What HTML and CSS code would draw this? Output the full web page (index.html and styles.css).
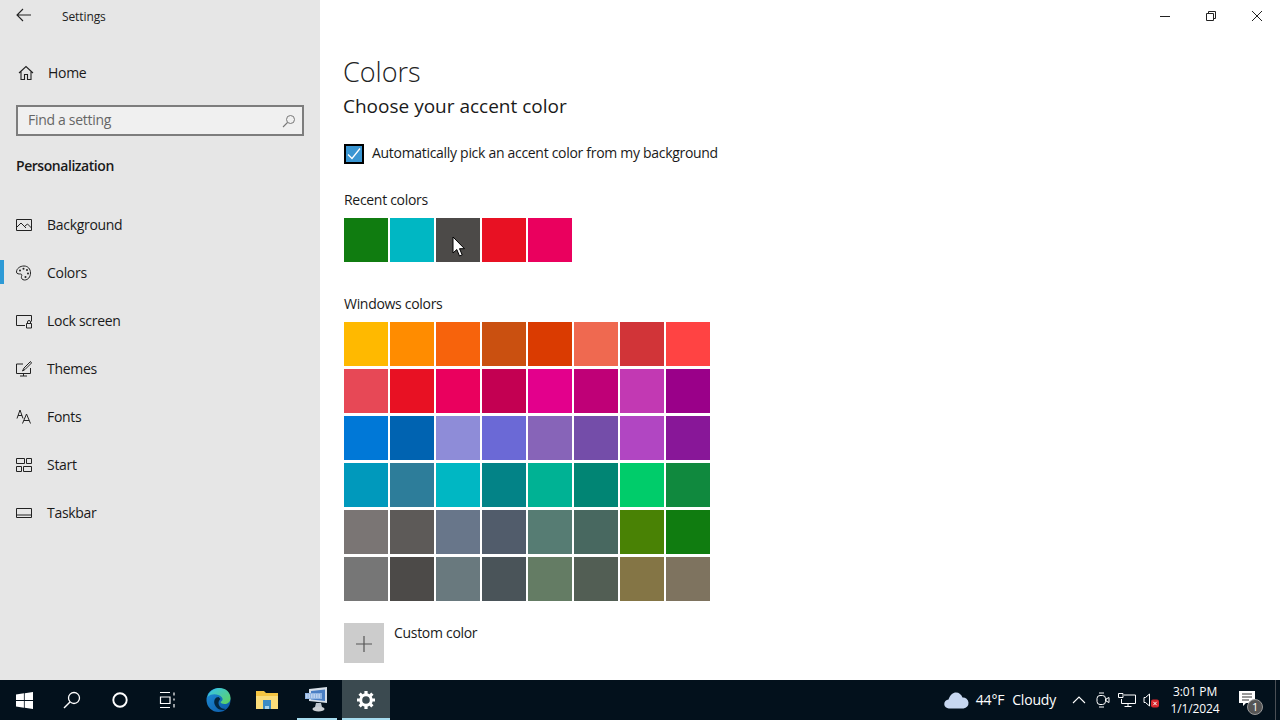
FILE: index.html
```html
<!DOCTYPE html>
<html lang="en">
<head>
<meta charset="utf-8">
<title>Settings</title>
<link rel="stylesheet" href="styles.css">
</head>
<body>
<div class="desktop">
  <div class="window">
    <aside class="sidebar">
      <div class="appbar">
        <svg class="back" width="16" height="14" viewBox="0 0 16 14"><path d="M7 1 1 7l6 6M1 7h14" fill="none" stroke="#222" stroke-width="1.1"/></svg>
        <span class="apptitle">Settings</span>
      </div>
      <div class="home">
        <svg class="navicon" width="16" height="16" viewBox="0 0 16 16"><path d="M1 8 8 1.5 15 8M3 6.500v8h3.500v-5h3v5H13v-8" fill="none" stroke="#222" stroke-width="1.100"/></svg>
        <span class="hometext">Home</span>
      </div>
      <div class="search">
        <span class="searchtext">Find a setting</span>
        <svg width="14" height="14" viewBox="0 0 14 14"><circle cx="8.500" cy="5.500" r="4" fill="none" stroke="#777" stroke-width="1"/><path d="M5.500 8.500 1 13" stroke="#777" stroke-width="1.100"/></svg>
      </div>
      <h2 class="section">Personalization</h2>
      <nav class="nav">
        <div class="navitem">
          <svg class="navicon" width="16" height="16" viewBox="0 0 16 16"><path d="M.5 2.500h15v11H.5zM.5 10.500 5 6l5 5M9 9l2.500-2 4 4" fill="none" stroke="#222"/></svg>
          <span>Background</span>
        </div>
        <div class="navitem active">
          <svg class="navicon" width="16" height="16" viewBox="0 0 16 16"><path d="M8 1C4 1 .5 3.500.5 7c0 2 2.500 2 4 2 1.500 0 1.500 1.500 1 2.500-.5 1.500.5 3.500 3 3.500 3.500 0 6-3 6-7S12 1 8 1z" fill="none" stroke="#222"/><circle cx="4" cy="5.500" r="1" fill="#222"/><circle cx="7.500" cy="3.800" r="1" fill="#222"/><circle cx="11" cy="5" r="1" fill="#222"/><circle cx="12" cy="8.500" r="1" fill="#222"/><circle cx="9.500" cy="12" r="1" fill="#222"/></svg>
          <span>Colors</span>
        </div>
        <div class="navitem">
          <svg class="navicon" width="16" height="16" viewBox="0 0 16 16"><path d="M9 12.500H.5v-10h15v6" fill="none" stroke="#222"/><path d="M10.500 10.500h5v4.500h-5zM11.500 10.500V9a1.500 1.500 0 0 1 3 0v1.500" fill="none" stroke="#222"/></svg>
          <span>Lock screen</span>
        </div>
        <div class="navitem">
          <svg class="navicon" width="16" height="16" viewBox="0 0 16 16"><path d="M7 3H.5v9.500h14V7M7.500 12.500V15M4 15h7" fill="none" stroke="#222"/><path d="M14.500.5 8 7l-1.500 3L9 8.500 15.500 2z" fill="none" stroke="#222"/></svg>
          <span>Themes</span>
        </div>
        <div class="navitem">
          <svg class="navicon" width="16" height="16" viewBox="0 0 16 16"><path d="M1 9.500 4 1l3 8.500M2 6.500h4M6.500 14.500 10.500 5l4 9.500M7.800 11.500h5.400" fill="none" stroke="#222"/></svg>
          <span>Fonts</span>
        </div>
        <div class="navitem">
          <svg class="navicon" width="16" height="16" viewBox="0 0 16 16"><path d="M.5 1.500h8v5h-8zM10.500 1.500h5v5h-5zM.5 9.500h5v5h-5zM7.500 9.500h8v5h-8z" fill="none" stroke="#222"/></svg>
          <span>Start</span>
        </div>
        <div class="navitem">
          <svg class="navicon" width="16" height="16" viewBox="0 0 16 16"><path d="M.5 3.500h15v9H.5zM.5 10h15" fill="none" stroke="#222"/></svg>
          <span>Taskbar</span>
        </div>
      </nav>
    </aside>
    <main class="content">
      <div class="controls">
        <div class="ctrl"><svg width="10" height="10" viewBox="0 0 10 10"><path d="M0 5.500h10" stroke="#222"/></svg></div>
        <div class="ctrl"><svg width="10" height="10" viewBox="0 0 10 10"><path d="M.5 2.500h7v7h-7zM2.500 2.500v-2h7v7h-2" fill="none" stroke="#222"/></svg></div>
        <div class="ctrl"><svg width="10" height="10" viewBox="0 0 10 10"><path d="M0 0l10 10M10 0 0 10" stroke="#222"/></svg></div>
      </div>
      <h1 class="title">Colors</h1>
      <h2 class="subtitle">Choose your accent color</h2>
      <div class="checkrow">
        <span class="checkbox"><svg width="16" height="16" viewBox="0 0 16 16"><path d="M2 8.500 6 12.500l8-10" fill="none" stroke="#fff" stroke-width="1.300"/></svg></span>
        <span class="checktext">Automatically pick an accent color from my background</span>
      </div>
      <div class="label recent-label">Recent colors</div>
      <div class="swatches recent">
        <div class="sw c-107c10"></div><div class="sw c-00b7c3"></div><div class="sw c-4c4a48"></div><div class="sw c-e81123"></div><div class="sw c-ea005e"></div>
      </div>
      <div class="label windows-label">Windows colors</div>
      <div class="swatches palette">
        <div class="sw c-ffb900"></div><div class="sw c-ff8c00"></div><div class="sw c-f7630c"></div><div class="sw c-ca5010"></div><div class="sw c-da3b01"></div><div class="sw c-ef6950"></div><div class="sw c-d13438"></div><div class="sw c-ff4343"></div>
        <div class="sw c-e74856"></div><div class="sw c-e81123"></div><div class="sw c-ea005e"></div><div class="sw c-c30052"></div><div class="sw c-e3008c"></div><div class="sw c-bf0077"></div><div class="sw c-c239b3"></div><div class="sw c-9a0089"></div>
        <div class="sw c-0078d7"></div><div class="sw c-0063b1"></div><div class="sw c-8e8cd8"></div><div class="sw c-6b69d6"></div><div class="sw c-8764b8"></div><div class="sw c-744da9"></div><div class="sw c-b146c2"></div><div class="sw c-881798"></div>
        <div class="sw c-0099bc"></div><div class="sw c-2d7d9a"></div><div class="sw c-00b7c3"></div><div class="sw c-038387"></div><div class="sw c-00b294"></div><div class="sw c-018574"></div><div class="sw c-00cc6a"></div><div class="sw c-10893e"></div>
        <div class="sw c-7a7574"></div><div class="sw c-5d5a58"></div><div class="sw c-68768a"></div><div class="sw c-515c6b"></div><div class="sw c-567c73"></div><div class="sw c-486860"></div><div class="sw c-498205"></div><div class="sw c-107c10"></div>
        <div class="sw c-767676"></div><div class="sw c-4c4a48"></div><div class="sw c-69797e"></div><div class="sw c-4a5459"></div><div class="sw c-647c64"></div><div class="sw c-525e54"></div><div class="sw c-847545"></div><div class="sw c-7e735f"></div>
      </div>
      <div class="custom">
        <div class="plus"><svg width="16" height="16" viewBox="0 0 16 16"><path d="M8 0v16M0 8h16" stroke="#555" stroke-width="1.200"/></svg></div>
        <span class="customtext">Custom color</span>
      </div>
    </main>
    <svg class="cursor" width="14" height="21" viewBox="0 0 14 21"><path d="M1 1v16l3.800-3.500 2.700 6.500 2.700-1.100-2.700-6.200H12.500z" fill="#fff" stroke="#000" stroke-width="1"/></svg>
  </div>
  <footer class="taskbar">
    <div class="tbtn"><svg width="17" height="17" viewBox="0 0 17 17"><path d="M0 2.400 7.900 1.300V8H0zM8.700 1.200 17 0v8H8.700zM0 9h7.900v6.700L0 14.600zM8.700 9H17v8l-8.300-1.200z" fill="#fff"/></svg></div>
    <div class="tbtn"><svg width="18" height="18" viewBox="0 0 18 18"><circle cx="11" cy="7" r="5.500" fill="none" stroke="#fff" stroke-width="1.300"/><path d="M7 11 1 17" stroke="#fff" stroke-width="1.500"/></svg></div>
    <div class="tbtn"><svg width="16" height="16" viewBox="0 0 16 16"><circle cx="8" cy="8" r="6.700" fill="none" stroke="#fff" stroke-width="1.900"/></svg></div>
    <div class="tbtn"><svg width="18" height="16" viewBox="0 0 18 16"><path d="M1 .5h10M1 15.500h10M1.500 5h9.500v6.500H1.500zM15 .5v3M15 6.500v2M15 12v3.500" fill="none" stroke="#fff" stroke-width="1.200"/></svg></div>
    <div class="tbtn edge"><svg width="25" height="24" viewBox="0 0 24 24">
      <defs>
        <linearGradient id="eb" x1="0" y1="0" x2="1" y2="1"><stop offset="0" stop-color="#1f8fd8"/><stop offset="1" stop-color="#0b57a4"/></linearGradient>
        <linearGradient id="eg" x1="0" y1="0" x2="1" y2="1"><stop offset="0" stop-color="#35c1f1"/><stop offset="1" stop-color="#5fd35a"/></linearGradient>
      </defs>
      <circle cx="12" cy="12" r="12" fill="url(#eb)"/>
      <path d="M1 9C3 2 9 0 13 0c6 0 11 4 11 10 0 4-3 6-6 6-2 0-4-1-4-2 2-1 3-3 1-5-3-3-10-4-14 0z" fill="url(#eg)"/>
      <path d="M12 9c-3 0-5 3-4 7 1 3 4 6 8 6 1 0 2 0 3-1-4 0-7-3-7-6 0-2 1-3 2-4z" fill="#03263f"/>
    </svg></div>
    <div class="tbtn files"><svg width="24" height="20" viewBox="0 0 24 20"><path d="M1 1h8l2 2h12v16H1z" fill="#f5c542"/><path d="M1 6h22v13H1z" fill="#fbdd7a"/><path d="M8 10h8v9h-2v-3h-4v3H8z" fill="#3b8ac4"/><path d="M10 16h4v3h-4z" fill="#a9d3ec"/></svg></div>
    <div class="tbtn app running"><svg width="24" height="26" viewBox="0 0 24 26"><path d="M5 2 23 0v16L5 14z" fill="#d7dfe8"/><path d="M7 4 21 2.500v11.500L7 12.500z" fill="#4a7fc4"/><path d="M1 6h17v6H1z" fill="#8fb4e2"/><path d="M2 8h15M2 10h15" stroke="#e8f0fb" stroke-dasharray="1.500 1"/><path d="M12 16h5l1 4h-7z" fill="#bcc4cc"/><ellipse cx="14.500" cy="22" rx="6" ry="2.500" fill="#c9ced3"/></svg></div>
    <div class="tbtn settings running"><svg width="20" height="20" viewBox="0 0 20 20"><circle cx="10" cy="10" r="5.300" fill="none" stroke="#fff" stroke-width="3"/><path d="M10 1v3M10 16v3M1 10h3M16 10h3M3.600 3.600l2.200 2.200M14.200 14.200l2.200 2.200M16.400 3.600l-2.200 2.200M5.800 14.200l-2.200 2.200" stroke="#fff" stroke-width="3.200"/></svg></div>
    <div class="tray">
      <svg class="cloud" width="25" height="17" viewBox="0 0 25 17"><path d="M5 16.500a4.500 4.500 0 0 1-.5-9C6 3 9 .5 12 .5c3 0 5.500 2 6.500 5a5.500 5.500 0 0 1 1 11z" fill="#c7d7f0"/></svg>
      <span class="weather">44°F</span>
      <span class="weather cloudy">Cloudy</span>
      <svg class="chev" width="14" height="8" viewBox="0 0 14 8"><path d="M1 7l6-6 6 6" fill="none" stroke="#fff" stroke-width="1.100"/></svg>
      <div class="trayicon"><svg width="14" height="16" viewBox="0 0 14 16"><rect x="1" y="3.500" width="8.500" height="9" rx="3" fill="none" stroke="#fff"/><path d="M10 7l3-1.500v5L10 9zM3 1h5M3 15h5" fill="none" stroke="#fff"/></svg></div>
      <div class="trayicon"><svg width="18" height="16" viewBox="0 0 18 16"><path d="M5 1.500H.5v4H5zM6 3h11.500v8.500H3.500V7M10 11.500V14.500M6.500 14.500h7" fill="none" stroke="#fff"/></svg></div>
      <div class="trayicon"><svg width="16" height="16" viewBox="0 0 16 16"><path d="M1 5.500h1.500L6.500 2v12l-4-3.500H1z" fill="none" stroke="#fff"/><rect x="8" y="7.500" width="8" height="8" rx="2" fill="#d8262c"/><path d="M10.300 9.800l3.400 3.400M13.700 9.800l-3.400 3.400" stroke="#fff"/></svg></div>
      <div class="clock"><span>3:01 PM</span><span>1/1/2024</span></div>
      <div class="notify">
        <svg class="bubble" width="16" height="16" viewBox="0 0 16 16"><path d="M0 0h16v12H7l-3 3v-3H0z" fill="#fff"/><path d="M3 3h10M3 6h10M3 9h7" stroke="#333"/></svg>
        <span class="badge">1</span>
      </div>
      <div class="showdesk"></div>
    </div>
  </footer>
</div>
</body>
</html>
```
FILE: styles.css
```css
* { box-sizing: border-box; }
html, body { margin: 0; height: 100%; }
body { font-family: "Open Sans", "Noto Sans", "Liberation Sans", sans-serif; font-size: 14px; letter-spacing: -0.3px; color: #1a1a1a; overflow: hidden; }
.desktop { width: 1280px; height: 720px; display: flex; flex-direction: column; }
.window { position: relative; flex: 1; display: flex; background: #fff; min-height: 0; }

.sidebar { width: 320px; background: #e6e6e6; display: flex; flex-direction: column; }
.appbar { height: 32px; display: flex; align-items: center; padding-left: 16px; }
.back { margin-top: -2px; }
.apptitle { margin-left: 30px; font-size: 12px; line-height: 32px; color: #222; padding-top: 1px; letter-spacing: -0.1px; }
.home { margin-top: 17px; height: 48px; display: flex; align-items: center; padding-left: 18px; }
.hometext { margin-left: 14px; font-size: 14px; margin-bottom: 1px; }
.search { margin: 8px 16px 0; height: 31px; border: 2px solid #7d7d7d; background: #f0f0f0; display: flex; align-items: center; justify-content: space-between; padding: 0 6px 0 10px; }
.searchtext { color: #666; font-size: 14px; margin-bottom: 3px; }
.section { margin: 16px 0 0 16px; font-size: 14px; line-height: 28px; font-weight: 600; letter-spacing: -0.45px; }
.nav { margin-top: 21px; display: flex; flex-direction: column; }
.navitem { position: relative; height: 48px; display: flex; align-items: center; gap: 15px; padding-left: 16px; font-size: 14px; }
.navitem span { margin-bottom: 1px; }
.navitem.active::before { content: ""; position: absolute; left: 0; top: 11px; width: 4px; height: 24px; background: #2e9ad6; }
.navicon { flex: none; }

.content { flex: 1; padding-left: 24px; min-width: 0; display: flex; flex-direction: column; align-items: flex-start; }
.controls { align-self: flex-end; height: 32px; display: flex; }
.ctrl { width: 46px; height: 32px; display: flex; align-items: center; justify-content: center; }
.title { margin: 20px 0 0 -1px; font-size: 27px; line-height: 40px; font-weight: 300; color: #222; letter-spacing: 0; }
.subtitle { margin: 0 0 0 -1px; font-size: 19px; line-height: 28px; font-weight: 400; color: #1a1a1a; letter-spacing: 0; }
.checkrow { margin-top: 24px; height: 20px; display: flex; align-items: center; gap: 8px; font-size: 14px; }
.checktext { margin-bottom: 3px; }
.checkbox { width: 20px; height: 20px; border: 2px solid #000; background: #3a96d2; display: flex; align-items: center; justify-content: center; }
.label { font-size: 14px; line-height: 20px; }
.recent-label { margin-top: 26px; }
.windows-label { margin-top: 32px; }
.swatches { margin-top: 8px; display: grid; grid-template-columns: repeat(8, 44px); column-gap: 2px; row-gap: 3px; }
.sw { width: 44px; height: 44px; }
.custom { margin-top: 22px; display: flex; align-items: flex-start; gap: 10px; }
.plus { width: 40px; height: 40px; background: #ccc; display: flex; align-items: center; justify-content: center; padding-top: 1px; }
.customtext { line-height: 20px; font-size: 14px; }
.cursor { position: absolute; left: 452px; top: 236px; }

.c-ffb900 { background: #ffb900; } .c-ff8c00 { background: #ff8c00; } .c-f7630c { background: #f7630c; } .c-ca5010 { background: #ca5010; }
.c-da3b01 { background: #da3b01; } .c-ef6950 { background: #ef6950; } .c-d13438 { background: #d13438; } .c-ff4343 { background: #ff4343; }
.c-e74856 { background: #e74856; } .c-e81123 { background: #e81123; } .c-ea005e { background: #ea005e; } .c-c30052 { background: #c30052; }
.c-e3008c { background: #e3008c; } .c-bf0077 { background: #bf0077; } .c-c239b3 { background: #c239b3; } .c-9a0089 { background: #9a0089; }
.c-0078d7 { background: #0078d7; } .c-0063b1 { background: #0063b1; } .c-8e8cd8 { background: #8e8cd8; } .c-6b69d6 { background: #6b69d6; }
.c-8764b8 { background: #8764b8; } .c-744da9 { background: #744da9; } .c-b146c2 { background: #b146c2; } .c-881798 { background: #881798; }
.c-0099bc { background: #0099bc; } .c-2d7d9a { background: #2d7d9a; } .c-00b7c3 { background: #00b7c3; } .c-038387 { background: #038387; }
.c-00b294 { background: #00b294; } .c-018574 { background: #018574; } .c-00cc6a { background: #00cc6a; } .c-10893e { background: #10893e; }
.c-7a7574 { background: #7a7574; } .c-5d5a58 { background: #5d5a58; } .c-68768a { background: #68768a; } .c-515c6b { background: #515c6b; }
.c-567c73 { background: #567c73; } .c-486860 { background: #486860; } .c-498205 { background: #498205; } .c-107c10 { background: #107c10; }
.c-767676 { background: #767676; } .c-4c4a48 { background: #4c4a48; } .c-69797e { background: #69797e; } .c-4a5459 { background: #4a5459; }
.c-647c64 { background: #647c64; } .c-525e54 { background: #525e54; } .c-847545 { background: #847545; } .c-7e735f { background: #7e735f; }

.taskbar { height: 40px; background: #03111c; display: flex; align-items: stretch; color: #fff; }
.tbtn { position: relative; width: 48px; display: flex; align-items: center; justify-content: center; }
.edge { margin-left: 2px; width: 49px; }
.files { width: 48px; }
.app { width: 49px; }
.settings { margin-left: 2px; background: #3b4a50; }
.running::after { content: ""; position: absolute; left: 6px; right: 3px; bottom: 0; height: 2px; background: #a6dcef; }
.settings.running::after { left: 0; right: 0; }
.tray { margin-left: auto; display: flex; align-items: center; font-size: 14px; letter-spacing: -0.2px; }
.cloud { margin-right: 7px; }
.weather { color: #fff; margin-bottom: 1px; }
.cloudy { margin-left: 8px; }
.chev { margin: 0 5px 0 16px; }
.trayicon { width: 24px; display: flex; justify-content: center; }
.clock { width: 58px; margin-left: 3px; display: flex; flex-direction: column; align-items: center; font-size: 12px; line-height: 17px; letter-spacing: -0.1px; }
.notify { position: relative; width: 48px; height: 40px; margin-right: 3px; }
.bubble { position: absolute; left: 15px; top: 11px; }
.badge { position: absolute; left: 23px; top: 19px; width: 16px; height: 16px; border-radius: 50%; background: #555; border: 1px solid #9a9a9a; font-size: 11px; line-height: 14px; text-align: center; color: #fff; }
.showdesk { width: 1px; height: 40px; margin-right: 4px; background: #4a4f55; }
```
